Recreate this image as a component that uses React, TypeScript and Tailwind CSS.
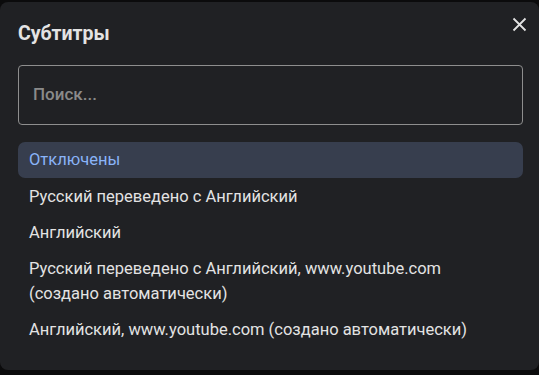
export default function App() {
  const items = [
    "Русский переведено с Английский",
    "Английский",
    "Русский переведено с Английский, www.youtube.com (создано автоматически)",
    "Английский, www.youtube.com (создано автоматически)",
  ];
  return (
    <div
      className="h-[375px] w-[539px] overflow-hidden bg-[#0b0b0c] pt-[2px]"
      style={{ fontFamily: "Roboto, 'Noto Sans', sans-serif" }}
    >
      <div className="h-[368px] rounded-[8px] bg-[#202124] pl-[18px] pr-[16px]">
        <div className="flex h-[63px] items-center justify-between">
          <h2 className="text-[19.5px] font-bold leading-[24px] text-[#e3e3e3]">Субтитры</h2>
          <svg width="15" height="15" viewBox="0 0 15 15" className="-mr-[4px] -mt-[19px] text-[#e3e3e3]">
            <path d="M1.5 1.5L13.5 13.5M13.5 1.5L1.5 13.5" stroke="currentColor" strokeWidth="1.8" />
          </svg>
        </div>
        <div className="flex h-[60px] items-center rounded-[4px] border border-[#8e8e8e] px-[14px]">
          <span className="text-[17px] font-medium text-[#8a8a8a]">Поиск...</span>
        </div>
        <div className="mt-[17px] flex flex-col">
          <div className="flex h-[36px] items-center rounded-[7px] bg-[#373e4e] px-[11px] text-[16.5px] text-[#8ab4f8]">
            Отключены
          </div>
          {items.map((t) => (
            <div key={t} className="px-[11px] py-[5.5px] text-[16.5px] leading-[25px] text-[#e3e3e3]">
              {t}
            </div>
          ))}
        </div>
      </div>
    </div>
  );
}
